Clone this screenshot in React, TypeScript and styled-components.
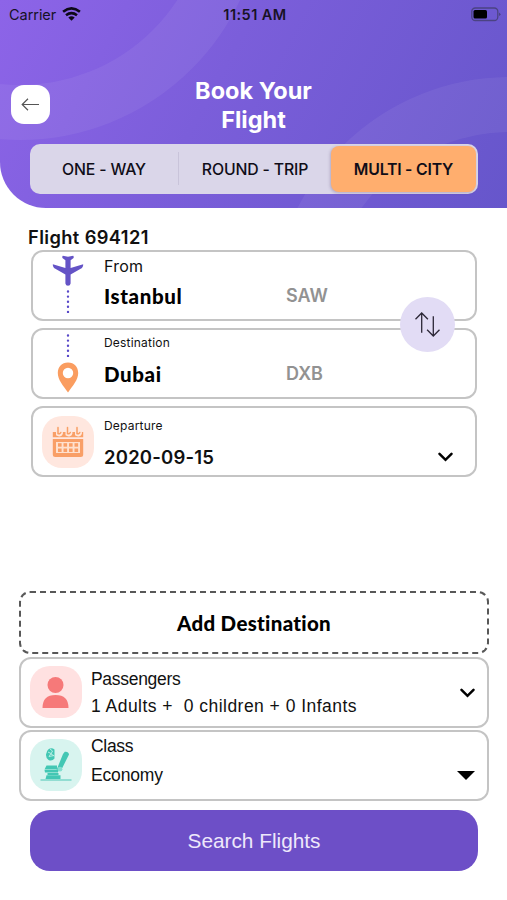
import React from "react";
import styled, { createGlobalStyle, css } from "styled-components";

const Global = createGlobalStyle`
  * { box-sizing: border-box; }
  html, body { margin: 0; background: #fff; }
  button { border: 0; padding: 0; background: none; font: inherit; color: inherit; }
  svg { display: block; flex: none; }
`;

const Screen = styled.div`
  width: 507px;
  height: 900px;
  overflow: hidden;
  background: #fff;
  color: #111;
  font-family: Inter, "Liberation Sans", sans-serif;
`;

const Header = styled.header`
  position: relative;
  height: 208px;
  overflow: hidden;
  border-bottom-left-radius: 46px;
  background: linear-gradient(118deg, #8d64e8 0%, #7b5eda 42%, #6656cb 100%);
`;

const Rings = styled.svg`
  position: absolute;
  inset: 0;
`;

const HeaderContent = styled.div`
  position: relative;
  display: flex;
  flex-direction: column;
`;

const StatusBar = styled.div`
  display: grid;
  grid-template-columns: 1fr auto 1fr;
  align-items: center;
  height: 28px;
  padding: 0 6px 0 9px;
  color: #171225;
  font-size: 14.5px;
`;

const Carrier = styled.div`
  display: flex;
  align-items: center;
  gap: 6px;
  letter-spacing: -0.05px;
`;

const Clock = styled.div`
  font-size: 14.5px;
  font-weight: 600;
  letter-spacing: 0.45px;
`;

const BatterySlot = styled.div`
  display: flex;
  justify-content: flex-end;
`;

const TitleRow = styled.div`
  display: grid;
  grid-template-columns: 39px 1fr 39px;
  align-items: center;
  margin-top: 48px;
  padding: 0 11px;
`;

const BackButton = styled.button`
  display: grid;
  place-items: center;
  width: 39px;
  height: 39px;
  margin-top: -2px;
  border-radius: 13px;
  background: #fff;
`;

const Title = styled.h1`
  width: 140px;
  margin: 0 auto;
  color: #fff;
  font-size: 23.5px;
  font-weight: 700;
  line-height: 29px;
  text-align: center;
`;

const Segments = styled.div`
  display: grid;
  grid-template-columns: 148px 1px 152px 145px;
  height: 50px;
  margin: 10px 29px 0 30px;
  padding: 2px 0 2px 0;
  border-radius: 10px;
  background: #dad6e9;
`;

const Segment = styled.button<{ $active?: boolean }>`
  height: 46px;
  border-radius: 8px;
  color: #100d18;
  font-size: 15.8px;
  font-weight: 500;
  letter-spacing: -0.15px;
  ${(p) => p.$active && css`
    background: #ffae6e;
    font-weight: 600;
    letter-spacing: -0.2px;
    box-shadow: -1px 1px 3px rgba(60, 40, 90, 0.25);
  `}
`;

const SegmentDivider = styled.i`
  height: 33px;
  margin-top: 6px;
  background: #c9c4da;
`;

const FlightTitle = styled.h2`
  height: 42px;
  margin: 0;
  padding: 16px 0 0 28px;
  font-size: 18.3px;
  font-weight: 600;
  line-height: 26px;
  letter-spacing: 0.38px;
`;

const FlightCards = styled.section`
  position: relative;
  display: flex;
  flex-direction: column;
  gap: 7px;
  padding: 0 30px 0 31px;
`;

const Card = styled.div`
  display: flex;
  height: 71px;
  border: 2px solid #c4c4c4;
  border-radius: 12px;
  background: #fff;
`;

const IconColumn = styled.div<{ $top: number; $gap?: number }>`
  display: flex;
  flex: none;
  flex-direction: column;
  align-items: center;
  gap: ${(p) => p.$gap ?? 0}px;
  width: 71px;
  padding: ${(p) => p.$top}px 2px 0 0;
`;

const Details = styled.div`
  flex: 1;
`;

const Caption = styled.div<{ $small?: boolean; $drop?: number }>`
  height: 26px;
  padding-top: ${(p) => p.$drop ?? 0}px;
  font-size: ${(p) => (p.$small ? 12 : 16)}px;
  line-height: ${(p) => (p.$small ? 26 : 29)}px;
  letter-spacing: ${(p) => (p.$small ? 0.2 : 0.25)}px;
`;

const PlaceRow = styled.div<{ $gap: number }>`
  display: grid;
  grid-template-columns: 182px auto;
  padding-top: ${(p) => p.$gap}px;
  line-height: 30px;
`;

const City = styled.strong`
  color: #000;
  font-family: Lato, sans-serif;
  font-size: 20.5px;
  font-weight: 900;
  font-variant-ligatures: none;
  letter-spacing: 0.6px;
`;

const AirportCode = styled.span`
  color: #929292;
  font-size: 18px;
  font-weight: 600;
`;

const DateRow = styled.div`
  display: flex;
  align-items: center;
  justify-content: space-between;
  padding: 8px 22px 0 0;
  font-size: 18.5px;
  font-weight: 600;
  line-height: 30px;
  letter-spacing: 0.2px;
`;

const SwapButton = styled.button`
  position: absolute;
  top: 47px;
  right: 52px;
  display: grid;
  place-items: center;
  width: 55px;
  height: 55px;
  border-radius: 50%;
  background: #e2dcf5;
`;

const IconTile = styled.div<{ $tint: string }>`
  display: grid;
  place-items: center;
  width: 52px;
  height: 52px;
  border-radius: 20px;
  background: ${(p) => p.$tint};
`;

const Options = styled.section`
  display: flex;
  flex-direction: column;
  gap: 2px;
  margin-top: 114px;
  padding: 0 18px 0 19px;
`;

const AddDestination = styled.button`
  height: 63px;
  margin-bottom: 1px;
  border: 2px dashed #585858;
  border-radius: 11px;
  color: #000;
  font-family: Lato, sans-serif;
  font-size: 20.5px;
  font-weight: 900;
  font-variant-ligatures: none;
  letter-spacing: 0.3px;
`;

const OptionText = styled.div<{ $top: number }>`
  flex: 1;
  margin-left: -1px;
  padding-top: ${(p) => p.$top}px;
`;

const OptionLine = styled.div<{ $height: number; $spacing: number }>`
  font-family: "Liberation Sans", Arial, sans-serif;
  font-size: 17.5px;
  line-height: ${(p) => p.$height}px;
  letter-spacing: ${(p) => p.$spacing}px;
  white-space: pre;
`;

const ArrowSlot = styled.div<{ $top: number; $right: number }>`
  padding: ${(p) => p.$top}px ${(p) => p.$right}px 0 0;
`;

const SearchButton = styled.button`
  display: block;
  width: 448px;
  height: 61px;
  margin: 9px 0 0 30px;
  border-radius: 20px;
  background: #6d4fc7;
  color: #eee8fb;
  font-family: "Liberation Sans", Arial, sans-serif;
  font-size: 20.8px;
`;

const Wifi = () => (
  <svg width="19" height="14" viewBox="0 0 19 14" fill="none" stroke="#0d0917" strokeWidth="2.6">
    <path d="M1.1 4.8Q9.5-2 17.9 4.8M4 8.2q5.5-4.3 11 0" />
    <path d="M6.3 10.4q3.2-2.2 6.4 0L9.5 13.7Z" fill="#0d0917" stroke="none" />
  </svg>
);

const Battery = () => (
  <svg width="30" height="15" viewBox="0 0 30 15">
    <rect x=".8" y="1" width="26" height="12.5" rx="3.5" fill="none" stroke="#4b4382" strokeWidth="1.3" />
    <rect x="2.5" y="3" width="13.5" height="8.5" rx="1.5" fill="#000" />
    <path d="M28 5.5q3 1.8 0 3.6Z" fill="#4b4382" />
  </svg>
);

const BackArrow = () => (
  <svg width="19" height="13" viewBox="0 0 19 13" fill="none" stroke="#555" strokeWidth="1.2">
    <path d="M18 6.5H1M7 .8 1.2 6.5 7 12.2" />
  </svg>
);

const Plane = () => (
  <svg width="32" height="31" viewBox="0 0 32 31" fill="#6453c6">
    <path d="M13.4 28.5V19.5L2 13Q.6 11.8.8 9.3L13.4 13V5.2L10.4 3Q9.9 1.6 10.8.8L16 1.7 21.2.8Q22.1 1.6 21.6 3L18.6 5.2V13L31.2 9.3Q31.4 11.8 30 13L18.6 19.5V28.5Q18.2 30.8 16 30.8T13.4 28.5Z" />
  </svg>
);

const Dots = ({ height }: { height: number }) => (
  <svg width="4" height={height} viewBox={`0 0 4 ${height}`}>
    <path d={`M2 1.5V${height}`} stroke="#5848c8" strokeWidth="2.4" strokeLinecap="round" strokeDasharray="0 5.1" />
  </svg>
);

const Pin = () => (
  <svg width="22" height="31" viewBox="0 0 22 31">
    <path fillRule="evenodd" fill="#fa9d60" d="M11 .5C4.7.5.8 5 .8 11c0 7 5.5 12.6 10.2 19.5C15.7 23.6 21.2 18 21.2 11 21.2 5 17.3.5 11 .5Zm0 5.3a5.2 5.2 0 1 1 0 10.4 5.2 5.2 0 0 1 0-10.4Z" />
  </svg>
);

const Calendar = () => (
  <svg width="32" height="32" viewBox="0 0 32 32">
    <path d="M.8 6h30.4v5.2H.8ZM.8 13h30.4v15.5q0 2.5-2.5 2.5H3.3Q.8 31 .8 28.5Z" fill="#f99f67" />
    {[6, 15.5, 25].map((x) => (
      <g key={x} fill="none" strokeLinecap="round">
        <path d={`M${x} 2v6q2.2 1.3 3-1`} stroke="#ffe7db" strokeWidth="4" />
        <path d={`M${x} 1.5v6q1.7 1 2.8-1`} stroke="#f99f67" strokeWidth="1.5" />
      </g>
    ))}
    <path d="M4 16h24v11H4Z" fill="#ffe1cf" />
    {[17.2, 22.5].map((y) =>
      [6, 11.5, 17, 22.5].map((x) => <rect key={`${x}-${y}`} x={x} y={y} width="3.6" height="3.5" fill="#f99f67" />)
    )}
  </svg>
);

const Swap = () => (
  <svg width="25" height="25" viewBox="0 0 25 25" fill="none" stroke="#2c2737" strokeWidth="1.3">
    <path d="M6.7 20.8V1M.5 7.2 6.7 1 12.9 7.2M18.3 4.2V24M12.1 17.8 18.3 24 24.5 17.8" />
  </svg>
);

const Chevron = () => (
  <svg width="15" height="10" viewBox="0 0 15 10" fill="none" stroke="#000" strokeWidth="2.5" strokeLinecap="round">
    <path d="m1.5 1.8 6 6 6-6" />
  </svg>
);

const Caret = () => (
  <svg width="18" height="9" viewBox="0 0 18 9"><path d="M0 0h18L9 9Z" /></svg>
);

const Person = () => (
  <svg width="27" height="33" viewBox="0 0 27 33" fill="#f67979">
    <circle cx="13.5" cy="9" r="8" />
    <path d="M.5 32q0-13 13-13t13 13Z" />
  </svg>
);

const Seat = () => (
  <svg width="32" height="34" viewBox="0 0 32 34" fill="#43c7b4">
    <path d="M8.5 1.2q3-2 6 .3v9q-2.5 3.2-6 1.5Q5.8 10 6 6.5T8.5 1.2Z" />
    <path d="m8 4 3 1.5-2 3 5-1M10 1l2.5 2-1.5 3 3.5 2" fill="none" stroke="#b7eee4" />
    <path d="m23 6 1.8-2.2q3.6-.6 4.2 2.6l-6.5 13.2-4.2 3.9-1.8-1.5Z" />
    <circle cx="20" cy="21.2" r="2.4" fill="#83ded0" />
    <path d="M6.5 17.5h10.5v4h-12.5ZM4.5 22h13.5v2.5h-13ZM7.5 25h11v2h-11ZM6.5 27.3h14V31H5.5Z" />
    <path d="M.5 32h31" stroke="#63cdbe" strokeWidth="1.2" />
  </svg>
);

export default function App() {
  return (
    <>
      <Global />
      <Screen>
        <Header>
          <Rings width="507" height="208" viewBox="0 0 507 208" fill="none" stroke="#fff" strokeOpacity=".06" strokeWidth="55">
            <circle cx="20" cy="-103" r="215.5" />
            <circle cx="510" cy="315" r="210.5" />
          </Rings>
          <HeaderContent>
            <StatusBar>
              <Carrier>Carrier <Wifi /></Carrier>
              <Clock>11:51 AM</Clock>
              <BatterySlot><Battery /></BatterySlot>
            </StatusBar>
            <TitleRow>
              <BackButton aria-label="Back"><BackArrow /></BackButton>
              <Title>Book Your Flight</Title>
            </TitleRow>
            <Segments>
              <Segment>ONE - WAY</Segment>
              <SegmentDivider />
              <Segment>ROUND - TRIP</Segment>
              <Segment $active>MULTI - CITY</Segment>
            </Segments>
          </HeaderContent>
        </Header>

        <FlightTitle>Flight 694121</FlightTitle>
        <FlightCards>
          <Card>
            <IconColumn $top={3} $gap={4}><Plane /><Dots height={24} /></IconColumn>
            <Details>
              <Caption>From</Caption>
              <PlaceRow $gap={3}><City>Istanbul</City><AirportCode>SAW</AirportCode></PlaceRow>
            </Details>
          </Card>
          <Card>
            <IconColumn $top={4} $gap={4}><Dots height={24} /><Pin /></IconColumn>
            <Details>
              <Caption $small>Destination</Caption>
              <PlaceRow $gap={3}><City>Dubai</City><AirportCode>DXB</AirportCode></PlaceRow>
            </Details>
          </Card>
          <Card>
            <IconColumn $top={8}><IconTile $tint="#ffe7df"><Calendar /></IconTile></IconColumn>
            <Details>
              <Caption $small $drop={5}>Departure</Caption>
              <DateRow>2020-09-15<Chevron /></DateRow>
            </Details>
          </Card>
          <SwapButton aria-label="Swap airports"><Swap /></SwapButton>
        </FlightCards>

        <Options>
          <AddDestination>Add Destination</AddDestination>
          <Card>
            <IconColumn $top={7}><IconTile $tint="#ffe1e1"><Person /></IconTile></IconColumn>
            <OptionText $top={7}>
              <OptionLine $height={27} $spacing={-0.3}>Passengers</OptionLine>
              <OptionLine $height={27} $spacing={0.47}>{"1 Adults +  0 children + 0 Infants"}</OptionLine>
            </OptionText>
            <ArrowSlot $top={29} $right={12}><Chevron /></ArrowSlot>
          </Card>
          <Card>
            <IconColumn $top={7}><IconTile $tint="#d8f4ef"><Seat /></IconTile></IconColumn>
            <OptionText $top={0}>
              <OptionLine $height={28} $spacing={-0.3}>Class</OptionLine>
              <OptionLine $height={30} $spacing={-0.15}>Economy</OptionLine>
            </OptionText>
            <ArrowSlot $top={39} $right={12}><Caret /></ArrowSlot>
          </Card>
        </Options>
        <SearchButton>Search Flights</SearchButton>
      </Screen>
    </>
  );
}
